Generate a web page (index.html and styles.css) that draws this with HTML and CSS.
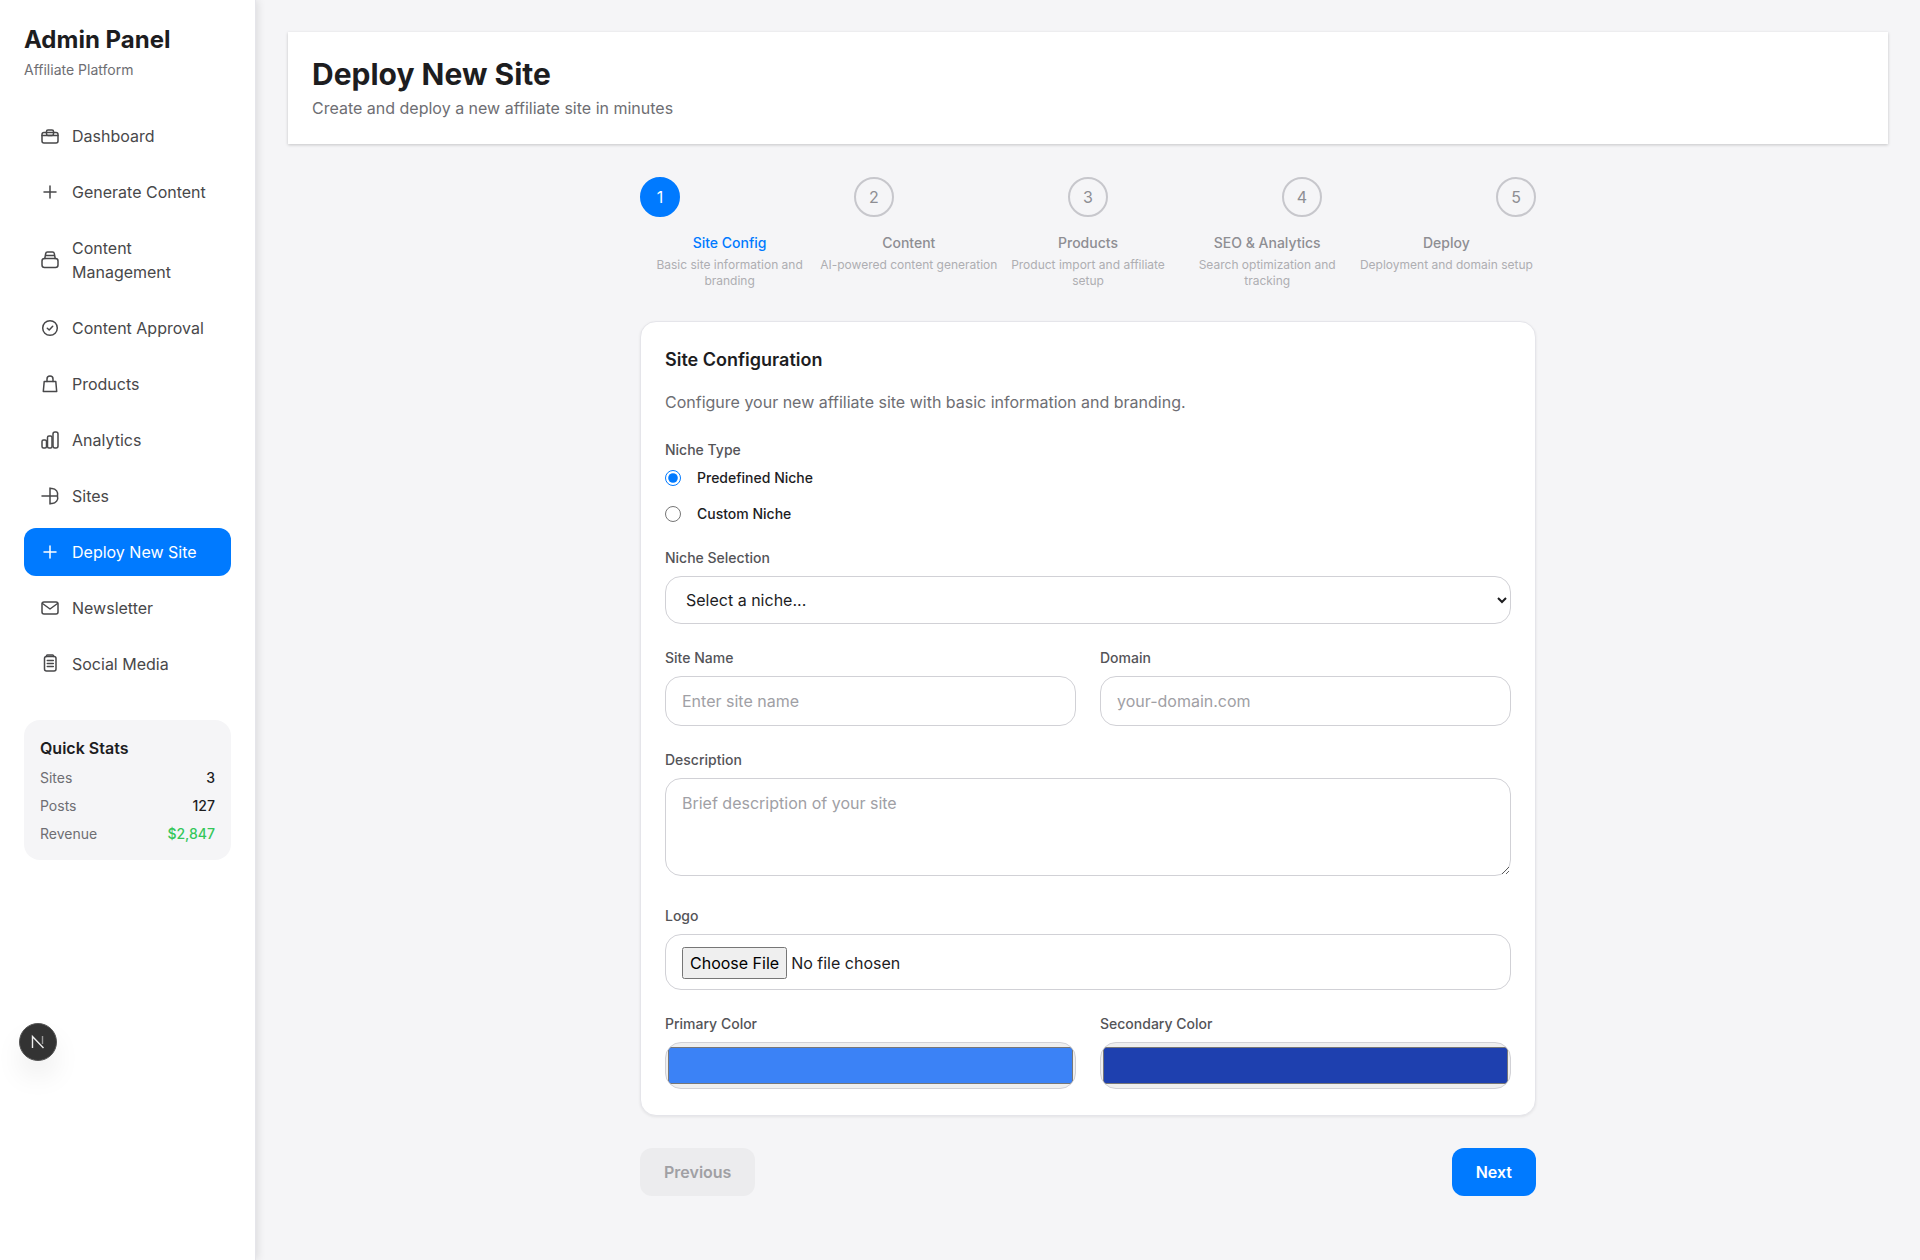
FILE: index.html
```html
<!DOCTYPE html>
<html lang="en">
<head>
<meta charset="utf-8">
<title>Deploy New Site</title>
<link rel="stylesheet" href="styles.css">
</head>
<body>
<div class="app">
  <aside class="sidebar">
    <div class="brand">
      <h1>Admin Panel</h1>
      <p>Affiliate Platform</p>
    </div>
    <nav class="nav">
      <a class="nav-item"><svg class="ico" viewBox="0 0 20 20"><rect x="2" y="6.500" width="16" height="10.500" rx="2"/><rect x="6.500" y="4" width="7" height="5.500" rx="1.500"/><path d="M2 9.500h16"/></svg><span>Dashboard</span></a>
      <a class="nav-item"><svg class="ico" viewBox="0 0 20 20"><path d="M10 4v12M4 10h12"/></svg><span>Generate Content</span></a>
      <a class="nav-item"><svg class="ico" viewBox="0 0 20 20"><rect x="2" y="8.500" width="16" height="9" rx="2.500"/><path d="M4.800 8.500l.9-5a1.800 1.800 0 0 1 1.800-1.500h5a1.800 1.800 0 0 1 1.800 1.500l.9 5M5.400 5.500h9.200"/></svg><span>Content Management</span></a>
      <a class="nav-item"><svg class="ico" viewBox="0 0 20 20"><circle cx="10" cy="10" r="7.300"/><path d="M7.300 10.300l1.900 1.700 3.500-3.800"/></svg><span>Content Approval</span></a>
      <a class="nav-item"><svg class="ico" viewBox="0 0 20 20"><path d="M4.200 7.500h11.600l.9 10H3.300z"/><path d="M7 7.500V5a3 3 0 0 1 6 0v2.500"/></svg><span>Products</span></a>
      <a class="nav-item"><svg class="ico" viewBox="0 0 20 20"><rect x="2" y="10" width="4.500" height="8" rx="1.500"/><rect x="7.500" y="6" width="4.500" height="12" rx="1.500"/><rect x="13" y="2" width="5" height="16" rx="2"/></svg><span>Analytics</span></a>
      <a class="nav-item"><svg class="ico" viewBox="0 0 20 20"><path d="M2 10h15.500M10 2v16M10 2.500h2a5.800 5.800 0 0 1 5.500 7.500 5.800 5.800 0 0 1-5.500 7.500h-2"/></svg><span>Sites</span></a>
      <a class="nav-item active"><svg class="ico" viewBox="0 0 20 20"><path d="M10 4v12M4 10h12"/></svg><span>Deploy New Site</span></a>
      <a class="nav-item"><svg class="ico" viewBox="0 0 20 20"><rect x="2" y="4" width="16" height="12" rx="2"/><path d="M2.500 5.500L10 11l7.500-5.500"/></svg><span>Newsletter</span></a>
      <a class="nav-item"><svg class="ico" viewBox="0 0 20 20"><rect x="4.500" y="2.500" width="11.500" height="14.500" rx="2"/><path d="M6.500 2.500V1.800a.8.800 0 0 1 .8-.8h5.400a.8.800 0 0 1 .8.800v.7M7.300 6.500h6M7.300 9.500h6M7.300 12.500h6"/></svg><span>Social Media</span></a>
    </nav>
    <section class="stats">
      <h3>Quick Stats</h3>
      <div class="stat"><span>Sites</span><b>3</b></div>
      <div class="stat"><span>Posts</span><b>127</b></div>
      <div class="stat"><span>Revenue</span><b class="green">$2,847</b></div>
    </section>
    <div class="next-badge"><svg viewBox="0 0 20 20"><path d="M4.500 16V4.500L15.500 16"/><path d="M14.500 4v8" class="fade"/></svg></div>
  </aside>
  <main class="main">
    <header class="page-head">
      <h2>Deploy New Site</h2>
      <p>Create and deploy a new affiliate site in minutes</p>
    </header>
    <div class="wizard">
      <div class="circles">
        <div class="circle current">1</div>
        <div class="circle">2</div>
        <div class="circle">3</div>
        <div class="circle">4</div>
        <div class="circle">5</div>
      </div>
      <div class="labels">
        <div class="lab current"><strong>Site Config</strong><small>Basic site information and branding</small></div>
        <div class="lab"><strong>Content</strong><small>AI-powered content generation</small></div>
        <div class="lab"><strong>Products</strong><small>Product import and affiliate setup</small></div>
        <div class="lab"><strong>SEO &amp; Analytics</strong><small>Search optimization and tracking</small></div>
        <div class="lab"><strong>Deploy</strong><small>Deployment and domain setup</small></div>
      </div>
      <form class="card">
        <h3>Site Configuration</h3>
        <p class="lead">Configure your new affiliate site with basic information and branding.</p>
        <div class="field niche">
          <span class="lbl">Niche Type</span>
          <label class="radio"><input type="radio" name="n" checked><span>Predefined Niche</span></label>
          <label class="radio"><input type="radio" name="n"><span>Custom Niche</span></label>
        </div>
        <div class="field">
          <label class="lbl">Niche Selection</label>
          <select class="ctl sel"><option>Select a niche...</option></select>
        </div>
        <div class="two">
          <div class="field"><label class="lbl">Site Name</label><input class="ctl" type="text" placeholder="Enter site name"></div>
          <div class="field"><label class="lbl">Domain</label><input class="ctl" type="text" placeholder="your-domain.com"></div>
        </div>
        <div class="field field-area"><label class="lbl">Description</label><textarea class="ctl area" rows="3" placeholder="Brief description of your site"></textarea></div>
        <div class="field"><label class="lbl">Logo</label><input class="ctl file" type="file"></div>
        <div class="two last">
          <div class="field"><label class="lbl">Primary Color</label><input class="ctl color" type="color" value="#3b82f6"></div>
          <div class="field"><label class="lbl">Secondary Color</label><input class="ctl color" type="color" value="#1e40af"></div>
        </div>
      </form>
      <div class="actions">
        <button type="button" class="btn prev">Previous</button>
        <button type="button" class="btn next">Next</button>
      </div>
    </div>
  </main>
</div>
</body>
</html>
```
FILE: styles.css
```css
* { box-sizing: border-box; }
html, body { margin: 0; height: 100%; }
body {
  font-family: Inter, "Liberation Sans", sans-serif;
  background: #f5f5f7;
  color: #1d1d1f;
  -webkit-font-smoothing: antialiased;
}
.app { display: flex; min-height: 1260px; }

.sidebar {
  position: relative;
  width: 256px;
  flex: none;
  padding: 24px;
  background: #fff;
  border-right: 1px solid #e5e5ea;
  box-shadow: 2px 0 8px rgba(0, 0, 0, 0.1);
}
.brand h1 { margin: 0; font-size: 24px; line-height: 32px; font-weight: 700; }
.brand p { margin: 4px 0 0; font-size: 14px; line-height: 20px; color: #6e6e73; }
.nav { margin-top: 32px; display: flex; flex-direction: column; gap: 8px; }
.nav-item {
  display: flex;
  align-items: center;
  gap: 12px;
  padding: 12px 16px;
  border-radius: 12px;
  font-size: 16px;
  line-height: 24px;
  color: #48484a;
}
.nav-item.active { background: #007aff; color: #fff; }
.ico {
  width: 20px;
  height: 20px;
  flex: none;
  fill: none;
  stroke: currentColor;
  stroke-width: 1.5;
  stroke-linecap: round;
  stroke-linejoin: round;
}
.stats {
  margin-top: 32px;
  padding: 16px;
  border-radius: 16px;
  background: #f5f5f7;
}
.stats h3 { margin: 0 0 8px; font-size: 16px; line-height: 24px; font-weight: 600; }
.stat { display: flex; justify-content: space-between; font-size: 14px; line-height: 20px; color: #6e6e73; }
.stat + .stat { margin-top: 8px; }
.stat b { font-weight: 500; color: #1d1d1f; }
.stat b.green { color: #34c759; }
.next-badge {
  position: absolute;
  left: 19px;
  top: 1023px;
  width: 38px;
  height: 38px;
  border-radius: 50%;
  background: #333;
  border: 1px solid #555;
  display: flex;
  align-items: center;
  justify-content: center;
  box-shadow: 0 16px 32px -8px rgba(0, 0, 0, 0.2);
}
.next-badge svg { width: 20px; height: 20px; fill: none; stroke: #eee; stroke-width: 1.4; }
.next-badge .fade { stroke: #999; }

.main { flex: 1; min-width: 0; padding: 32px; }
.page-head {
  background: #fff;
  padding: 24px;
  height: 112px;
  box-shadow: 0 1px 3px rgba(0, 0, 0, 0.2);
}
.page-head h2 { margin: 0; font-size: 30px; line-height: 36px; font-weight: 700; }
.page-head p { margin: 4px 0 0; font-size: 16px; line-height: 24px; color: #6e6e73; }

.wizard { width: 896px; margin: 33px auto 0; }
.circles { display: flex; justify-content: space-between; }
.circle {
  width: 40px;
  height: 40px;
  border-radius: 50%;
  border: 2px solid #c7c7cc;
  color: #8e8e93;
  display: flex;
  align-items: center;
  justify-content: center;
  font-size: 16px;
}
.circle.current { background: #007aff; border-color: #007aff; color: #fff; }
.labels { display: grid; grid-template-columns: repeat(5, 1fr); margin-top: 16px; }
.lab { text-align: center; }
.lab strong { display: block; font-size: 14px; line-height: 20px; font-weight: 500; color: #8e8e93; }
.lab.current strong { color: #007aff; }
.lab small { display: block; margin-top: 4px; font-size: 12px; line-height: 16px; color: #aeaeb2; }

.card {
  margin-top: 32px;
  padding: 24px;
  background: #fff;
  border: 1px solid #e5e5ea;
  border-radius: 16px;
  box-shadow: 0 1px 3px rgba(0, 0, 0, 0.08);
}
.card h3 { margin: 0; font-size: 18px; line-height: 28px; font-weight: 600; }
.lead { margin: 16px 0 26px; font-size: 16px; line-height: 24px; color: #6e6e73; }
.field { margin-bottom: 24px; min-width: 0; }
.field-area { margin-bottom: 30px; }
.lbl { display: block; margin-bottom: 8px; font-size: 14px; line-height: 20px; font-weight: 500; color: #545458; }
.niche { margin-bottom: 21px; }
.niche .lbl { margin-bottom: 5px; }
.radio { display: flex; align-items: center; gap: 16px; height: 26px; font-size: 14px; font-weight: 500; color: #1d1d1f; }
.radio + .radio { margin-top: 10px; }
.radio span { margin-top: -1px; }
.radio input { width: 16px; height: 16px; margin: 0; accent-color: #007aff; }
.ctl {
  display: block;
  width: 100%;
  padding: 12px 16px;
  border: 1px solid #d1d1d6;
  border-radius: 16px;
  background: #fff;
  font-family: inherit;
  font-size: 16px;
  line-height: 24px;
  color: #1d1d1f;
}
.ctl::placeholder { color: #a0a0a5; }
.sel { height: 48px; line-height: 22px; }
.area { height: 98px; resize: vertical; }
.file { height: 56px; }
.file::file-selector-button { font: inherit; padding: 4px 6px; }
.color { height: 47px; padding: 0; background: #efefef; }
.color::-webkit-color-swatch { border-radius: 3px; }
.two { display: grid; grid-template-columns: 1fr 1fr; gap: 24px; }
.two.last .field { margin-bottom: 2px; }

.actions { display: flex; justify-content: space-between; margin-top: 32px; }
.btn {
  height: 48px;
  padding: 0 24px;
  border: 0;
  border-radius: 12px;
  font-family: inherit;
  font-size: 16px;
  font-weight: 600;
}
.btn.prev { background: #ececee; color: #a0a0a4; }
.btn.next { background: #007aff; color: #fff; }
```
